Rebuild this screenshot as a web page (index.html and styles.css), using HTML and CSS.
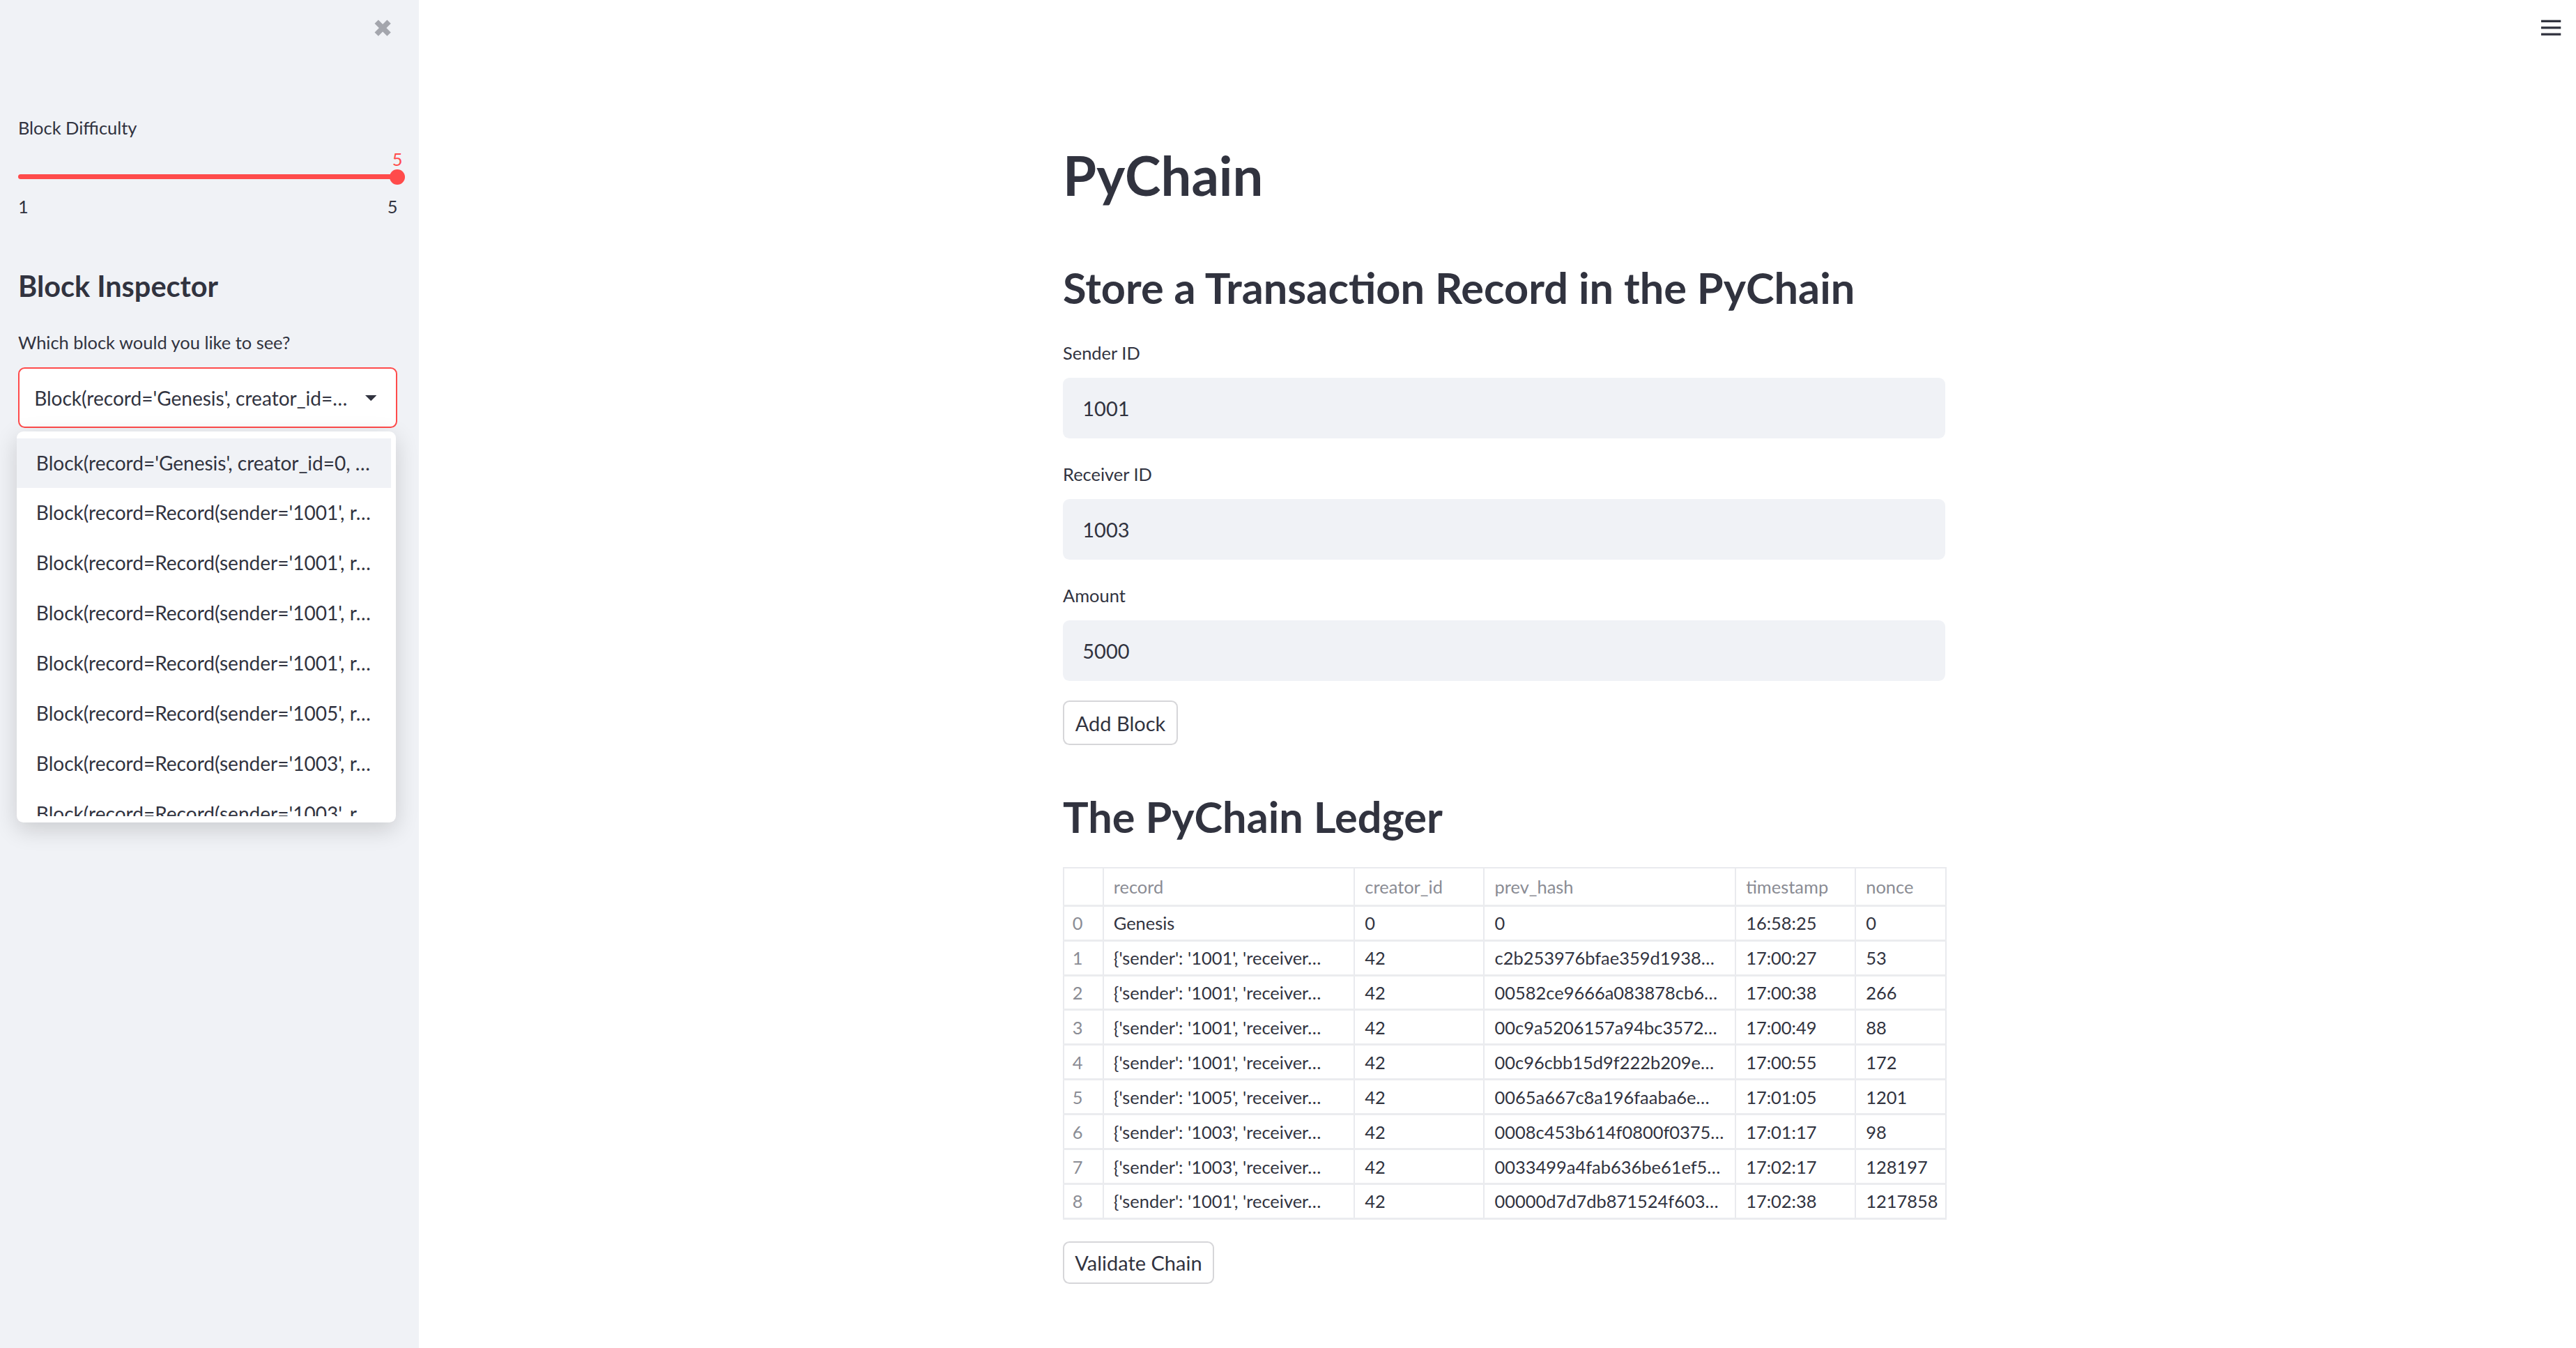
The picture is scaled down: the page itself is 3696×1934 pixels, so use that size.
FILE: index.html
```html
<!DOCTYPE html>
<html lang="en">
<head>
<meta charset="utf-8">
<title>PyChain</title>
<link rel="stylesheet" href="styles.css">
</head>
<body>
<div class="app">
  <aside class="sidebar">
    <div class="sb-top">
      <button class="close-btn" aria-label="Close sidebar">
        <svg viewBox="0 0 12 12" width="12" height="12"><path d="M2.2 2.2 L9.8 9.8 M9.8 2.2 L2.2 9.8" stroke="#a4a6ad" stroke-width="3.2" fill="none"/></svg>
      </button>
    </div>
    <div class="sb-label first">Block Difficulty</div>
    <div class="slider">
      <div class="track"></div>
      <div class="knob"><span class="knob-val">5</span></div>
    </div>
    <div class="ticks"><span>1</span><span>5</span></div>
    <h2 class="sb-heading">Block Inspector</h2>
    <div class="sb-label">Which block would you like to see?</div>
    <div class="select-wrap">
      <div class="select">
        <span class="select-text">Block(record='Genesis', creator_id=…</span>
        <svg class="caret" viewBox="0 0 8 4" width="7" height="3.5"><polygon points="0,0 8,0 4,4" fill="#31333f"/></svg>
      </div>
      <div class="menu">
        <ul class="menu-list">
          <li class="active">Block(record='Genesis', creator_id=0, …</li>
          <li>Block(record=Record(sender='1001', r…</li>
          <li>Block(record=Record(sender='1001', r…</li>
          <li>Block(record=Record(sender='1001', r…</li>
          <li>Block(record=Record(sender='1001', r…</li>
          <li>Block(record=Record(sender='1005', r…</li>
          <li>Block(record=Record(sender='1003', r…</li>
          <li>Block(record=Record(sender='1003', r…</li>
        </ul>
      </div>
    </div>
  </aside>
  <main class="main">
    <div class="topbar">
      <svg viewBox="0 0 12 10" width="12" height="10"><rect x="0" y="0.3" width="12" height="1.4" fill="#31333f"/><rect x="0" y="4.3" width="12" height="1.4" fill="#31333f"/><rect x="0" y="8.3" width="12" height="1.4" fill="#31333f"/></svg>
    </div>
    <div class="content">
      <h1 class="title">PyChain</h1>
      <h2 class="header first">Store a Transaction Record in the PyChain</h2>
      <div class="field first">
        <div class="field-label">Sender ID</div>
        <div class="input">1001</div>
      </div>
      <div class="field">
        <div class="field-label">Receiver ID</div>
        <div class="input">1003</div>
      </div>
      <div class="field">
        <div class="field-label">Amount</div>
        <div class="input">5000</div>
      </div>
      <button class="btn btn-add">Add Block</button>
      <h2 class="header ledger">The PyChain Ledger</h2>
      <table class="ledger-table">
        <colgroup>
          <col class="c-idx"><col class="c-rec"><col class="c-cre"><col class="c-hash"><col class="c-ts"><col class="c-non">
        </colgroup>
        <thead>
          <tr><th class="idx"></th><th>record</th><th>creator_id</th><th>prev_hash</th><th>timestamp</th><th>nonce</th></tr>
        </thead>
        <tbody>
          <tr><td class="idx">0</td><td>Genesis</td><td>0</td><td>0</td><td>16:58:25</td><td>0</td></tr>
          <tr><td class="idx">1</td><td>{'sender': '1001', 'receiver…</td><td>42</td><td>c2b253976bfae359d1938…</td><td>17:00:27</td><td>53</td></tr>
          <tr><td class="idx">2</td><td>{'sender': '1001', 'receiver…</td><td>42</td><td>00582ce9666a083878cb6…</td><td>17:00:38</td><td>266</td></tr>
          <tr><td class="idx">3</td><td>{'sender': '1001', 'receiver…</td><td>42</td><td>00c9a5206157a94bc3572…</td><td>17:00:49</td><td>88</td></tr>
          <tr><td class="idx">4</td><td>{'sender': '1001', 'receiver…</td><td>42</td><td>00c96cbb15d9f222b209e…</td><td>17:00:55</td><td>172</td></tr>
          <tr><td class="idx">5</td><td>{'sender': '1005', 'receiver…</td><td>42</td><td>0065a667c8a196faaba6e…</td><td>17:01:05</td><td>1201</td></tr>
          <tr><td class="idx">6</td><td>{'sender': '1003', 'receiver…</td><td>42</td><td>0008c453b614f0800f0375…</td><td>17:01:17</td><td>98</td></tr>
          <tr><td class="idx">7</td><td>{'sender': '1003', 'receiver…</td><td>42</td><td>0033499a4fab636be61ef5…</td><td>17:02:17</td><td>128197</td></tr>
          <tr><td class="idx">8</td><td>{'sender': '1001', 'receiver…</td><td>42</td><td>00000d7d7db871524f603…</td><td>17:02:38</td><td>1217858</td></tr>
        </tbody>
      </table>
      <button class="btn btn-validate">Validate Chain</button>
    </div>
  </main>
</div>
</body>
</html>
```

FILE: styles.css
```css
html, body {
  margin: 0;
  padding: 0;
  overflow: hidden;
  background: #ffffff;
}

.app {
  zoom: 2.3571;
  width: 1568px;
  height: 820.5px;
  display: flex;
  font-family: "Lato", "Noto Sans", sans-serif;
  color: #31333f;
}

/* ---------- Sidebar ---------- */
.sidebar {
  width: 255px;
  flex: none;
  background: #f0f2f6;
  box-sizing: border-box;
  padding: 0 13px 0 11px;
}

.sb-top {
  height: 34px;
  display: flex;
  justify-content: flex-end;
  align-items: center;
  padding-right: 3px;
}

.close-btn {
  border: 0;
  background: transparent;
  padding: 0;
  width: 12px;
  height: 12px;
  display: flex;
}

.sb-label {
  font-size: 10.8px;
  line-height: 14px;
  height: 14px;
  margin-top: 16.2px;
  white-space: nowrap;
}

.sb-label.first {
  margin-top: 36.7px;
}

.slider {
  position: relative;
  height: 30px;
}

.track {
  position: absolute;
  left: 0;
  right: 0;
  top: 21.5px;
  height: 3px;
  border-radius: 2px;
  background: #ff4b4b;
}

.knob {
  position: absolute;
  right: -4.6px;
  top: 18.4px;
  width: 9.4px;
  height: 9.4px;
  border-radius: 50%;
  background: #ff4b4b;
}

.knob-val {
  position: absolute;
  left: 50%;
  transform: translateX(-50%);
  bottom: 8.6px;
  font-size: 10.8px;
  line-height: 14px;
  color: #ff4b4b;
}

.ticks {
  display: flex;
  justify-content: space-between;
  font-size: 10.8px;
  line-height: 14px;
  margin-top: 4px;
}

.sb-heading {
  margin: 30.5px 0 0;
  font-size: 17.6px;
  line-height: 22px;
  font-weight: 700;
}

.select-wrap {
  position: relative;
  margin-top: 8.3px;
}

.select {
  height: 37px;
  box-sizing: border-box;
  border: 1px solid #ff4b4b;
  border-radius: 4px;
  background: #ffffff;
  display: flex;
  align-items: center;
  justify-content: space-between;
  padding: 0 12px 0 9px;
  font-size: 11.9px;
}

.select-text {
  white-space: nowrap;
}

.caret {
  flex: none;
}

.menu {
  position: absolute;
  top: calc(100% + 2px);
  left: -1px;
  right: 1px;
  background: #ffffff;
  border-radius: 4px;
  box-shadow: 0 4px 14px rgba(0, 0, 0, 0.16);
  padding: 4px 0;
  z-index: 5;
}

.menu-list {
  list-style: none;
  margin: 0 3px 0 0;
  padding: 0;
  height: 230px;
  overflow: hidden;
}

.menu-list li {
  height: 30.5px;
  line-height: 30.5px;
  padding-left: 12px;
  font-size: 11.9px;
  white-space: nowrap;
}

.menu-list li.active {
  background: #f0f2f6;
}

/* ---------- Main ---------- */
.main {
  flex: 1;
  background: #ffffff;
}

.topbar {
  height: 34px;
  display: flex;
  justify-content: flex-end;
  align-items: center;
  padding-right: 9px;
}

.content {
  width: 537px;
  margin-left: 392px;
}

.title {
  margin: 52.5px 0 0;
  font-size: 33px;
  line-height: 40px;
  font-weight: 700;
}

.header {
  margin: 28.8px 0 0;
  font-size: 26px;
  line-height: 30px;
  font-weight: 700;
}

.header.first {
  margin-top: 33.8px;
}

.field {
  margin-top: 14.7px;
}

.field.first {
  margin-top: 17.6px;
}

.field-label {
  font-size: 10.8px;
  line-height: 14px;
  height: 14px;
}

.input {
  margin-top: 8.1px;
  height: 37px;
  line-height: 37px;
  background: #f0f2f6;
  border-radius: 4px;
  padding-left: 12px;
  font-size: 12.3px;
}

.btn {
  display: block;
  box-sizing: border-box;
  background: #ffffff;
  border: 1px solid rgba(49, 51, 63, 0.2);
  border-radius: 4px;
  font-family: inherit;
  color: #31333f;
  font-size: 12.3px;
  padding: 0;
  text-align: center;
}

.btn-add {
  margin-top: 12px;
  width: 70px;
  height: 27px;
}

.btn-validate {
  margin-top: 13px;
  width: 92px;
  height: 26px;
}

.ledger-table {
  margin-top: 15.4px;
  width: 537px;
  table-layout: fixed;
  border-collapse: collapse;
  border: 1px solid #e9eaee;
  font-size: 10.8px;
}

.c-idx { width: 24px; }
.c-rec { width: 153px; }
.c-cre { width: 79px; }
.c-hash { width: 153px; }
.c-ts { width: 73px; }
.c-non { width: 55px; }

.ledger-table th,
.ledger-table td {
  padding: 0 0 0 6px;
  text-align: left;
  white-space: nowrap;
  overflow: hidden;
  text-overflow: clip;
  border-left: 1px solid #e9eaee;
  border-bottom: 1.5px solid #ebecef;
}

.ledger-table th {
  height: 22px;
  font-weight: 400;
  color: #8a8c94;
}

.ledger-table td {
  height: 19.9px;
}

.ledger-table .idx {
  padding-left: 5px;
  color: #8a8c94;
}
```
